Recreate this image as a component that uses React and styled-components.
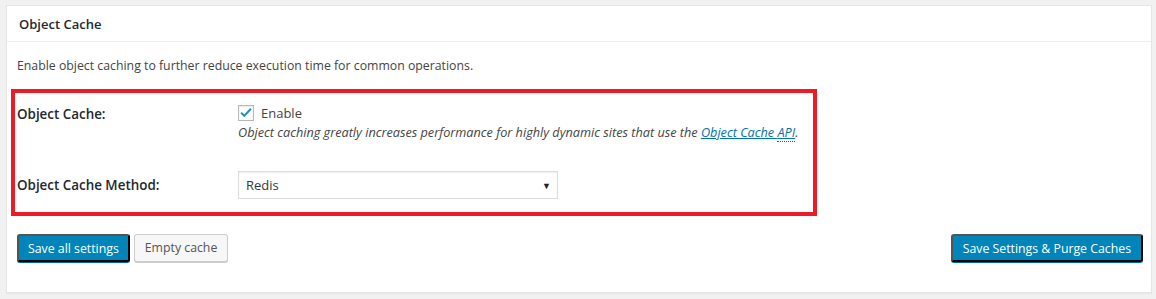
import React from 'react';
import styled, { createGlobalStyle } from 'styled-components';

const Global = createGlobalStyle`
  html, body {
    margin: 0;
    padding: 0;
    background: #f1f1f1;
  }
  body {
    font-family: 'Open Sans', 'Noto Sans', sans-serif;
    font-size: 12.3px;
    color: #444;
  }
`;

const Panel = styled.div`
  margin: 5px 4px 6px 6px;
  background: #fff;
  border: 1px solid #e5e5e5;
  box-shadow: 0 1px 1px rgba(0,0,0,0.04);
  height: 288px;
  box-sizing: border-box;
  display: flex;
  flex-direction: column;
`;

const Header = styled.div`
  height: 35px;
  border-bottom: 1px solid #eee;
  display: flex;
  align-items: center;
  padding-left: 12px;
`;

const Title = styled.h2`
  margin: 0;
  font-size: 13px;
  font-weight: 600;
  color: #23282d;
`;

const Body = styled.div`
  padding: 0 8px 0 4px;
  display: flex;
  flex-direction: column;
`;

const Intro = styled.p`
  margin: 15px 0 0 6px;
  line-height: 18px;
  color: #444;
`;

const Highlight = styled.div`
  margin-top: 14px;
  width: 806px;
  height: 127px;
  box-sizing: border-box;
  border: 4px solid #ed1c24;
  display: flex;
  flex-direction: column;
  padding: 11px 0 0 2px;
`;

const Row = styled.div`
  display: flex;
  align-items: flex-start;
  height: ${p => p.h}px;
`;

const Label = styled.div`
  width: 221px;
  flex: none;
  font-size: 13.4px;
  font-weight: 600;
  color: #23282d;
  line-height: 18px;
  padding-top: ${p => p.top || 0}px;
`;

const Field = styled.div`
  display: flex;
  flex-direction: column;
`;

const CheckLine = styled.label`
  display: flex;
  align-items: center;
  gap: 7px;
  height: 18px;
  font-size: 13px;
  color: #444;
`;

const Box = styled.span`
  width: 16px;
  height: 16px;
  box-sizing: border-box;
  border: 1px solid #b4b9be;
  box-shadow: inset 0 1px 2px rgba(0,0,0,0.1);
  display: flex;
  align-items: center;
  justify-content: center;
  background: #fff;
`;

const Help = styled.p`
  margin: 1px 0 0 0;
  font-style: italic;
  font-size: 12.7px;
  line-height: 18px;
  color: #444;
`;

const HelpLink = styled.a`
  color: #0073aa;
  text-decoration: underline;
`;

const Abbr = styled.abbr`
  text-decoration: none;
  border-bottom: 1px dotted #555;
`;

const Select = styled.div`
  width: 320px;
  height: 28px;
  box-sizing: border-box;
  border: 1px solid #ddd;
  box-shadow: inset 0 1px 2px rgba(0,0,0,0.07);
  display: flex;
  align-items: center;
  justify-content: space-between;
  padding: 0 6px 0 7px;
  font-size: 13px;
  color: #32373c;
`;

const Arrow = styled.span`
  font-size: 9px;
  color: #222;
`;

const Actions = styled.div`
  margin-top: 18px;
  padding: 0 0 0 6px;
  display: flex;
  align-items: center;
  gap: 4px;
`;

const Button = styled.button`
  font-family: inherit;
  font-size: 12.3px;
  height: 28px;
  line-height: 26px;
  padding: 0 ${p => (p.primary && !p.push ? 9 : 10)}px 1px;
  border-radius: 3px;
  cursor: pointer;
  box-sizing: border-box;
  background: ${p => (p.primary ? '#0085ba' : '#f7f7f7')};
  border: 1px solid ${p => (p.primary ? '#0073aa #006799 #006799' : '#ccc')};
  box-shadow: 0 1px 0 ${p => (p.primary ? '#006799' : '#ccc')};
  color: ${p => (p.primary ? '#fff' : '#555')};
  margin-left: ${p => (p.push ? 'auto' : '0')};
`;

export default function App() {
  return (
    <>
      <Global />
      <Panel>
        <Header>
          <Title>Object Cache</Title>
        </Header>
        <Body>
          <Intro>Enable object caching to further reduce execution time for common operations.</Intro>
          <Highlight>
            <Row h={67}>
              <Label top={1}>Object Cache:</Label>
              <Field>
                <CheckLine>
                  <Box>
                    <svg width="14" height="14" viewBox="0 0 20 20">
                      <path d="M4 10.5l3.5 3.5L16 5" fill="none" stroke="#1e8cbe" strokeWidth="2.8" strokeLinecap="square" />
                    </svg>
                  </Box>
                  Enable
                </CheckLine>
                <Help>
                  Object caching greatly increases performance for highly dynamic sites that use the{' '}
                  <HelpLink href="#">Object Cache <Abbr title="Application Programming Interface">API</Abbr></HelpLink>.
                </Help>
              </Field>
            </Row>
            <Row h={40}>
              <Label top={5}>Object Cache Method:</Label>
              <Select>
                <span>Redis</span>
                <Arrow>▼</Arrow>
              </Select>
            </Row>
          </Highlight>
          <Actions>
            <Button primary>Save all settings</Button>
            <Button>Empty cache</Button>
            <Button primary push>Save Settings &amp; Purge Caches</Button>
          </Actions>
        </Body>
      </Panel>
    </>
  );
}
